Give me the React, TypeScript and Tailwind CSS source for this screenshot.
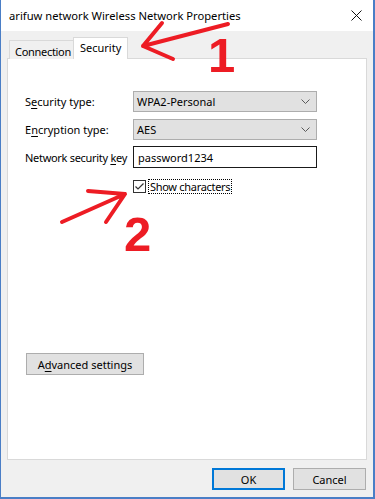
import React from "react";

const Chevron = () => (
  <svg width="9" height="5" viewBox="0 0 9 5" className="block">
    <polyline points="0.5,0.5 4.5,4.5 8.5,0.5" fill="none" stroke="#5a5a5a" strokeWidth="1" />
  </svg>
);

export default function App() {
  return (
    <div className="relative w-[375px] h-[499px] overflow-hidden font-['Noto_Sans',sans-serif] text-[11px] leading-none text-black">
      <div className="flex flex-col w-full h-full border-l border-r-2 border-b-2 border-[#4a7ec6] bg-[#f0f0f0]">
        {/* title bar */}
        <div className="h-[31px] shrink-0 bg-white flex items-center justify-between pl-[8px] pr-[11px]">
          <span className="text-[11.2px]">arifuw network Wireless Network Properties</span>
          <svg width="11" height="11" viewBox="0 0 11 11" className="block">
            <path d="M0.5 0.5 L10.5 10.5 M10.5 0.5 L0.5 10.5" stroke="#111" strokeWidth="1" />
          </svg>
        </div>
        {/* body */}
        <div className="flex-1 flex flex-col pt-[7px] pl-[6px] pr-[6px] pb-[7px]">
          {/* tabs */}
          <div className="h-[21px] flex items-end pl-[2px] shrink-0">
            <div className="relative h-[19px] w-[65px] border-t border-l border-[#d9d9d9] bg-[#f0f0f0] pl-[5px] pt-[2px] flex items-center whitespace-nowrap tracking-[-0.3px]">
              Connection
            </div>
            <div className="relative z-10 -ml-[1px] h-[22px] w-[55px] border-t border-l border-r border-[#d9d9d9] bg-white pl-[6px] pb-[3px] flex items-center whitespace-nowrap">
              Security
            </div>
          </div>
          {/* panel */}
          <div className="-mt-[1px] flex-1 bg-white border border-[#d9d9d9] flex flex-col pl-[17px] pt-[32px]">
            <div className="flex items-center h-[21px]">
              <div className="w-[108px]">
                S<span className="underline underline-offset-2">e</span>curity type:
              </div>
              <div className="w-[184px] h-[21px] bg-[#e1e1e1] border border-[#adadad] flex items-center justify-between pl-[3px] pr-[6px]">
                <span>WPA2-Personal</span>
                <Chevron />
              </div>
            </div>
            <div className="flex items-center h-[21px] mt-[7px]">
              <div className="w-[108px]">
                E<span className="underline underline-offset-2">n</span>cryption type:
              </div>
              <div className="w-[184px] h-[21px] bg-[#e1e1e1] border border-[#adadad] flex items-center justify-between pl-[3px] pr-[6px]">
                <span>AES</span>
                <Chevron />
              </div>
            </div>
            <div className="flex items-center h-[22px] mt-[6px]">
              <div className="w-[108px] whitespace-nowrap tracking-[-0.3px]">
                Network security <span className="underline underline-offset-2">k</span>ey
              </div>
              <div className="w-[184px] h-[22px] bg-white border border-[#1a1a1a] flex items-center pl-[4px]">
                <span>password1234</span>
              </div>
            </div>
            <div className="flex items-center h-[15px] mt-[11px] pl-[108px]">
              <div className="w-[13px] h-[13px] border border-[#333] bg-white flex items-center justify-center shrink-0">
                <svg width="11" height="11" viewBox="0 0 11 11" className="block">
                  <polyline points="1.5,5.5 4,8 9.5,2.5" fill="none" stroke="#333" strokeWidth="1.2" />
                </svg>
              </div>
              <div className="ml-[2px] h-[15px] border border-dotted border-black flex items-center px-[1px] whitespace-nowrap tracking-[-0.3px]">
                Show characters
              </div>
            </div>
            <div className="mt-[159px] ml-[1px] w-[118px] h-[22px] bg-[#e1e1e1] border border-[#adadad] flex items-center justify-center">
              A<span className="underline underline-offset-2">d</span>vanced settings
            </div>
          </div>
          {/* footer */}
          <div className="shrink-0 flex justify-end gap-[8px] mt-[8px] pr-[1px]">
            <div className="w-[73px] h-[22px] bg-[#e1e1e1] border-2 border-[#0078d7] flex items-center justify-center">OK</div>
            <div className="w-[73px] h-[22px] bg-[#e1e1e1] border border-[#adadad] flex items-center justify-center">Cancel</div>
          </div>
        </div>
      </div>

      {/* annotations */}
      <svg className="absolute inset-0 pointer-events-none" width="375" height="499" viewBox="0 0 375 499">
        <g fill="none" stroke="#ed1c24" strokeWidth="4" strokeLinecap="round" strokeLinejoin="round">
          <path d="M228 24 L143 46 M162 23 L143 46 L173 59" />
          <path d="M62 222 L125 194 M88 191 L125 194 L106 222" />
        </g>
      </svg>
      <div className="absolute left-[208px] top-[31px] text-[49px] leading-none font-bold text-[#ed1c24] font-['Liberation_Sans',sans-serif]">1</div>
      <div className="absolute left-[124px] top-[210px] text-[49px] leading-none font-bold text-[#ed1c24] font-['Liberation_Sans',sans-serif]">2</div>
    </div>
  );
}
